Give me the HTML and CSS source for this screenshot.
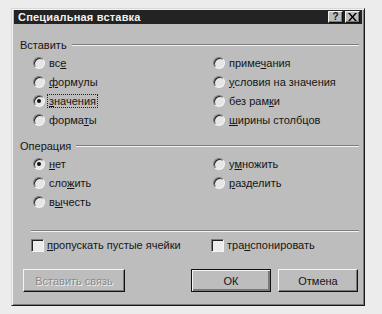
FILE: index.html
```html
<!DOCTYPE html>
<html lang="ru">
<head>
<meta charset="utf-8">
<link rel="stylesheet" href="styles.css">
</head>
<body>
<div class="dialog">
  <div class="titlebar">
    <span class="title">Специальная вставка</span>
    <div class="tbtns">
      <span class="tbtn help">?</span>
      <span class="tbtn close">
        <svg width="9" height="8" viewBox="0 0 9 8"><path d="M0 0h2l2.5 3 2.5-3h2L5.5 4 9 8H7L4.5 5 2 8H0l3.5-4z" fill="#000"/></svg>
      </span>
    </div>
  </div>
  <div class="content">
    <div class="grouphead g1"><span>Вставить</span><i class="line"></i></div>
    <div class="options">
      <label class="opt"><span class="radio"></span><span>вс<u>е</u></span></label>
      <label class="opt"><span class="radio"></span><span>приме<u>ч</u>ания</span></label>
      <label class="opt"><span class="radio"></span><span><u>ф</u>ормулы</span></label>
      <label class="opt"><span class="radio"></span><span><u>у</u>словия на значения</span></label>
      <label class="opt"><span class="radio on"></span><span class="focus"><u>з</u>начения</span></label>
      <label class="opt"><span class="radio"></span><span>без рам<u>к</u>и</span></label>
      <label class="opt"><span class="radio"></span><span>форма<u>т</u>ы</span></label>
      <label class="opt"><span class="radio"></span><span><u>ш</u>ирины столбцов</span></label>
    </div>
    <div class="grouphead g2"><span>Операция</span><i class="line"></i></div>
    <div class="options">
      <label class="opt"><span class="radio on"></span><span><u>н</u>ет</span></label>
      <label class="opt"><span class="radio"></span><span>у<u>м</u>ножить</span></label>
      <label class="opt"><span class="radio"></span><span>сло<u>ж</u>ить</span></label>
      <label class="opt"><span class="radio"></span><span><u>р</u>азделить</span></label>
      <label class="opt"><span class="radio"></span><span>в<u>ы</u>честь</span></label>
    </div>
    <i class="sep"></i>
    <div class="checks">
      <label class="chk"><span class="box"></span><span><u>п</u>ропускать пустые ячейки</span></label>
      <label class="chk"><span class="box"></span><span>тра<u>н</u>спонировать</span></label>
    </div>
    <div class="buttons">
      <span class="btn disabled link">Вставить связь</span>
      <span class="btn default ok">ОК</span>
      <span class="btn cancel">Отмена</span>
    </div>
  </div>
</div>
</body>
</html>
```

FILE: styles.css
```css
html, body {
  margin: 0;
  padding: 0;
  background: #ececec;
}
body {
  padding: 8px 0 0 11px;
  font-family: "Liberation Sans", Arial, sans-serif;
  font-size: 11px;
  color: #151515;
}
.dialog {
  width: 354px;
  height: 298px;
  box-sizing: border-box;
  background: #bdbdbd;
  border: 1px solid;
  border-color: #d8d8d8 #1a1a1a #1a1a1a #d8d8d8;
  box-shadow: inset 1px 1px 0 #f4f4f4, inset -1px -1px 0 #7a7a7a;
  padding: 1px 2px 2px 2px;
}
.titlebar {
  height: 14px;
  background: #232323;
  display: flex;
  align-items: center;
  justify-content: space-between;
  padding: 0 2px 0 4px;
}
.title {
  color: #f2f2f2;
  font-weight: bold;
  font-size: 11px;
  letter-spacing: 0.2px;
}
.tbtns {
  display: flex;
  gap: 2px;
}
.tbtn {
  width: 15px;
  height: 12px;
  box-sizing: border-box;
  background: #bdbdbd;
  border: 1px solid;
  border-color: #f2f2f2 #111 #111 #f2f2f2;
  box-shadow: inset -1px -1px 0 #7a7a7a;
  display: flex;
  align-items: center;
  justify-content: center;
  font-weight: bold;
  font-size: 10px;
  line-height: 1;
}
.close svg { display: block; }
.content {
  padding: 0 3px 0 6px;
}
.grouphead {
  height: 13px;
  display: flex;
  align-items: center;
}
.g1 { margin-top: 14px; }
.g2 { margin-top: 10px; }
.grouphead .line {
  flex: 1;
  height: 0;
  border-top: 1px solid #7c7c7c;
  border-bottom: 1px solid #f2f2f2;
  margin-left: 5px;
}
.options {
  display: grid;
  grid-template-columns: 180px 1fr;
  grid-auto-rows: 19px;
  margin-top: 2px;
  padding-left: 13px;
}
.opt {
  display: flex;
  align-items: center;
  gap: 4px;
}
.radio {
  width: 12px;
  height: 12px;
  box-sizing: border-box;
  border-radius: 50%;
  border: 1px solid;
  border-color: #7a7a7a #f4f4f4 #f4f4f4 #7a7a7a;
  background: #e6e6e6;
  box-shadow: inset 1px 1px 0 #222;
  display: flex;
  align-items: center;
  justify-content: center;
  flex: none;
}
.radio.on::after {
  content: "";
  width: 4px;
  height: 4px;
  border-radius: 50%;
  background: #111;
}
u { text-decoration: underline; text-underline-offset: 1px; }
.focus {
  outline: 1px dotted #222;
  outline-offset: 0;
  padding: 0 1px;
  margin-left: -1px;
}
.sep {
  display: block;
  margin: 19px 0 0 11px;
  border-top: 1px solid #7c7c7c;
  border-bottom: 1px solid #f2f2f2;
}
.checks {
  display: grid;
  grid-template-columns: 180px 1fr;
  margin-top: 6px;
  padding-left: 11px;
  height: 14px;
}
.chk {
  display: flex;
  align-items: center;
  gap: 3px;
}
.box {
  width: 13px;
  height: 13px;
  box-sizing: border-box;
  border: 1px solid;
  border-color: #7a7a7a #f4f4f4 #f4f4f4 #7a7a7a;
  box-shadow: inset 1px 1px 0 #222;
  background: #ececec;
  flex: none;
}
.buttons {
  display: flex;
  margin-top: 17px;
  padding-left: 3px;
}
.btn {
  height: 23px;
  box-sizing: border-box;
  display: flex;
  align-items: center;
  justify-content: center;
  background: #bdbdbd;
  border: 1px solid;
  border-color: #f4f4f4 #111 #111 #f4f4f4;
  box-shadow: inset -1px -1px 0 #7a7a7a;
  color: #151515;
}
.link { width: 102px; }
.ok { width: 80px; margin-left: 66px; }
.cancel { width: 80px; margin-left: 7px; }
.btn.default {
  border: 1px solid #111;
  box-shadow: inset 1px 1px 0 #f4f4f4, inset -2px -2px 0 #7a7a7a;
}
.btn.disabled {
  color: #8a8a8a;
  text-shadow: 1px 1px 0 #f0f0f0;
}
```
